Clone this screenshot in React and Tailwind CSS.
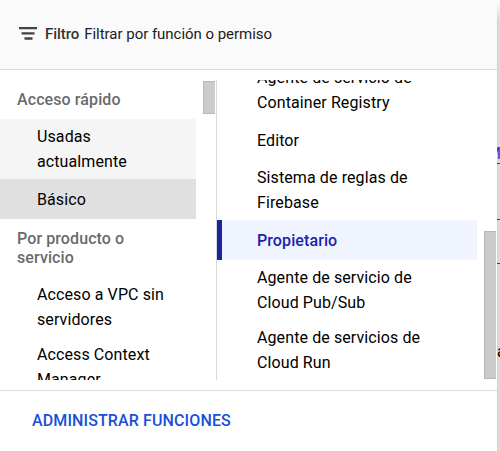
import React from "react";

function Item({ lines, className = "" }) {
  return (
    <div className={`flex min-h-[40px] shrink-0 flex-col justify-center py-[5px] text-[16px] leading-[25px] tracking-[0.1px] whitespace-nowrap ${className}`}>
      {lines.map((line) => (
        <span key={line}>{line}</span>
      ))}
    </div>
  );
}

function Heading({ lines }) {
  return (
    <div className="flex shrink-0 flex-col py-[10px] pl-[17px] text-[16px] leading-[19px] font-medium tracking-[0.1px] whitespace-nowrap text-[#6a6a6a]">
      {lines.map((line) => (
        <span key={line}>{line}</span>
      ))}
    </div>
  );
}

export default function App() {
  return (
    <div className="flex h-[451px] w-[500px] overflow-hidden bg-white font-['Roboto',sans-serif] text-black">
      <main className="flex w-[497px] shrink-0 flex-col bg-white">
        <header className="flex h-[70px] shrink-0 items-center border-b border-[#dadada] bg-[#fafafa] pl-[19px] text-[15px] text-[#212121]">
          <svg width="18" height="13" viewBox="0 0 18 13" fill="#424242" className="-mt-[2px]" aria-hidden="true">
            <path d="M0 0h18v2.2H0zM2.5 5.2h13v2.2h-13zM5.5 10.3h8v2.4h-8z" />
          </svg>
          <span className="ml-[8px] font-medium tracking-[-0.05px] text-[#333]">Filtro</span>
          <span className="ml-[5px] tracking-[-0.03px]">Filtrar por función o permiso</span>
        </header>
        <div className="flex h-[320px] shrink-0 py-[10px]">
          <nav className="flex h-[300px] w-[217px] shrink-0 justify-between overflow-hidden border-r border-[#dadada]">
            <div className="flex w-[196px] flex-col">
              <Heading lines={["Acceso rápido"]} />
              <Item lines={["Usadas", "actualmente"]} className="bg-[#f5f5f5] pl-[37px]" />
              <Item lines={["Básico"]} className="bg-[#e0e0e0] pl-[37px]" />
              <Heading lines={["Por producto o", "servicio"]} />
              <Item lines={["Acceso a VPC sin", "servidores"]} className="pl-[37px]" />
              <Item lines={["Access Context", "Manager"]} className="pl-[37px]" />
            </div>
            <div className="mt-[1px] mr-[1px] h-[33px] w-[12px] border border-r-0 border-[#b8b8b8] bg-[#cbcbcb]" />
          </nav>
          <section className="flex h-[300px] w-[280px] overflow-hidden">
            <div className="-mt-[20px] flex w-[260px] shrink-0 flex-col">
              <Item lines={["Agente de servicio de", "Container Registry"]} className="pl-[40px]" />
              <Item lines={["Editor"]} className="pl-[40px]" />
              <Item lines={["Sistema de reglas de", "Firebase"]} className="pl-[40px]" />
              <Item lines={["Propietario"]} className="border-l-[5px] border-[#1a23a0] bg-[#f0f4fe] pl-[35px] font-medium text-[#1a23b0]" />
              <Item lines={["Agente de servicio de", "Cloud Pub/Sub"]} className="pl-[40px]" />
              <Item lines={["Agente de servicios de", "Cloud Run"]} className="pl-[40px]" />
            </div>
            <div className="mt-[151px] ml-[7px] h-[148px] w-[12px] border border-r-0 border-[#b8b8b8] bg-[#cbcbcb]" />
          </section>
        </div>
        <footer className="flex h-[61px] items-center border-t border-[#dadada] pl-[32px] text-[16px] font-medium tracking-[0.12px] text-[#1a4fd8]">
          ADMINISTRAR FUNCIONES
        </footer>
      </main>
      <aside className="flex h-[451px] w-[3px] flex-col overflow-hidden bg-linear-to-r from-[#cecece] to-[#e2e2e2] text-[16px] leading-[19px]">
        <div className="h-[144px] shrink-0 bg-linear-to-b from-white to-transparent to-15%" />
        <div className="-mr-px flex h-[20px] shrink-0 justify-end border-b border-[#1a3cc8] text-[#1a3cc8]">M</div>
        <div className="h-[56px] shrink-0 border-b border-[#444]" />
        <div className="h-[44px] shrink-0 border-b border-[#444]" />
        <div className="mt-[78px] h-[20px] shrink-0">a</div>
      </aside>
    </div>
  );
}
